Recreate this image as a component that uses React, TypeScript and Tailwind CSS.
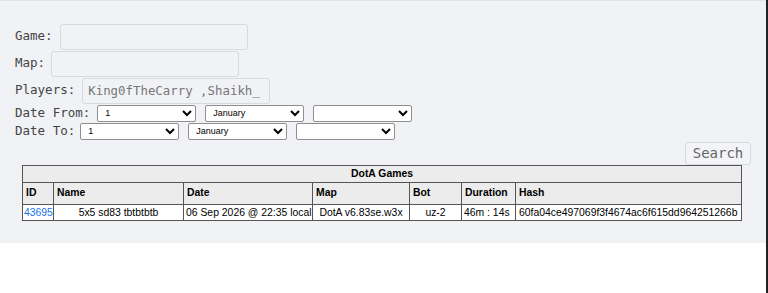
import React from "react";

const mono = { fontFamily: '"DejaVu Sans Mono", "Liberation Mono", monospace' };

function Field({ label, width, value, gap }: { label: string; width: number; value?: string; gap: number }) {
  return (
    <div className="flex items-center h-[27px]">
      <span className="text-[12.5px] text-[#444]" style={{ marginRight: gap }}>
        {label}
      </span>
      <input
        readOnly
        value={value ?? ""}
        className="h-[26px] rounded-[3px] border border-[#d9dadf] bg-transparent px-[5px] text-[12.4px] text-[#777] outline-none"
        style={{ width, ...mono }}
      />
    </div>
  );
}

function Sel({ value, w }: { value: string; w: number }) {
  return (
    <select
      defaultValue={value}
      className="h-[17px] rounded-[2px] border border-[#8f8f8f] bg-white pl-[3px] text-[9px] text-black"
      style={{ width: w, fontFamily: '"Liberation Sans", Arial, sans-serif' }}
    >
      <option value={value}>{value}</option>
    </select>
  );
}

export default function App() {
  const cols = [
    { name: "ID", w: 31 },
    { name: "Name", w: 130 },
    { name: "Date", w: 129 },
    { name: "Map", w: 97 },
    { name: "Bot", w: 52 },
    { name: "Duration", w: 54 },
    { name: "Hash", w: 226 },
  ];
  return (
    <div className="w-[768px] h-[293px] bg-white border-r-2 border-[#222]">
      <div className="bg-[#f1f2f6] border-t border-[#e2e3e8] h-[243px] pl-[15px] pr-[15px] pt-[22px]" style={mono}>
        <Field label="Game:" width={188} gap={7} />
        <Field label="Map:" width={188} gap={6} />
        <Field label="Players:" width={188} gap={7} value="King0fTheCarry ,Shaikh_" />
        <div className="flex items-center h-[18px] text-[12.5px] text-[#444]">
          <span className="mr-[7px]">Date From:</span>
          <div className="flex gap-[9px]">
            <Sel value="1" w={99} />
            <Sel value="January" w={99} />
            <Sel value="" w={99} />
          </div>
        </div>
        <div className="flex items-center h-[18px] text-[12.5px] text-[#444]">
          <span className="mr-[5px]">Date To:</span>
          <div className="flex gap-[9px]">
            <Sel value="1" w={99} />
            <Sel value="January" w={99} />
            <Sel value="" w={99} />
          </div>
        </div>
        <div className="flex justify-end mt-[2px]">
          <button
            className="h-[23px] w-[66px] rounded-[3px] border border-[#d9dadf] bg-[#f3f4f7] text-[14px] text-[#666]"
            style={mono}
          >
            Search
          </button>
        </div>
        <table
          className="ml-[7px] w-[719px] table-fixed border-collapse border border-[#444] text-[10.4px] text-black"
          style={{ fontFamily: '"Liberation Sans", Arial, sans-serif' }}
        >
          <colgroup>
            {cols.map((c) => (
              <col key={c.name} style={{ width: c.w }} />
            ))}
          </colgroup>
          <tbody>
            <tr className="h-[16px] bg-[#ececec]">
              <td colSpan={7} className="border border-[#555] p-0 text-center font-bold">
                DotA Games
              </td>
            </tr>
            <tr className="h-[22px] bg-[#ececec]">
              {cols.map((c) => (
                <td key={c.name} className="border border-[#555] px-[3px] py-0 text-left font-bold">
                  {c.name}
                </td>
              ))}
            </tr>
            <tr className="h-[16px] bg-white">
              <td className="border border-[#555] px-[1px] py-0 text-[#1a73e8]">43695</td>
              <td className="border border-[#555] py-0 text-center">5x5 sd83 tbtbtbtb</td>
              <td className="border border-[#555] px-[2px] py-0 whitespace-nowrap">06 Sep 2026 @ 22:35 local</td>
              <td className="border border-[#555] py-0 text-center whitespace-nowrap">DotA v6.83se.w3x</td>
              <td className="border border-[#555] py-0 text-center">uz-2</td>
              <td className="border border-[#555] px-[2px] py-0 whitespace-nowrap">46m : 14s</td>
              <td className="border border-[#555] px-[3px] py-0 whitespace-nowrap">60fa04ce497069f3f4674ac6f615dd964251266b</td>
            </tr>
          </tbody>
        </table>
      </div>
    </div>
  );
}
